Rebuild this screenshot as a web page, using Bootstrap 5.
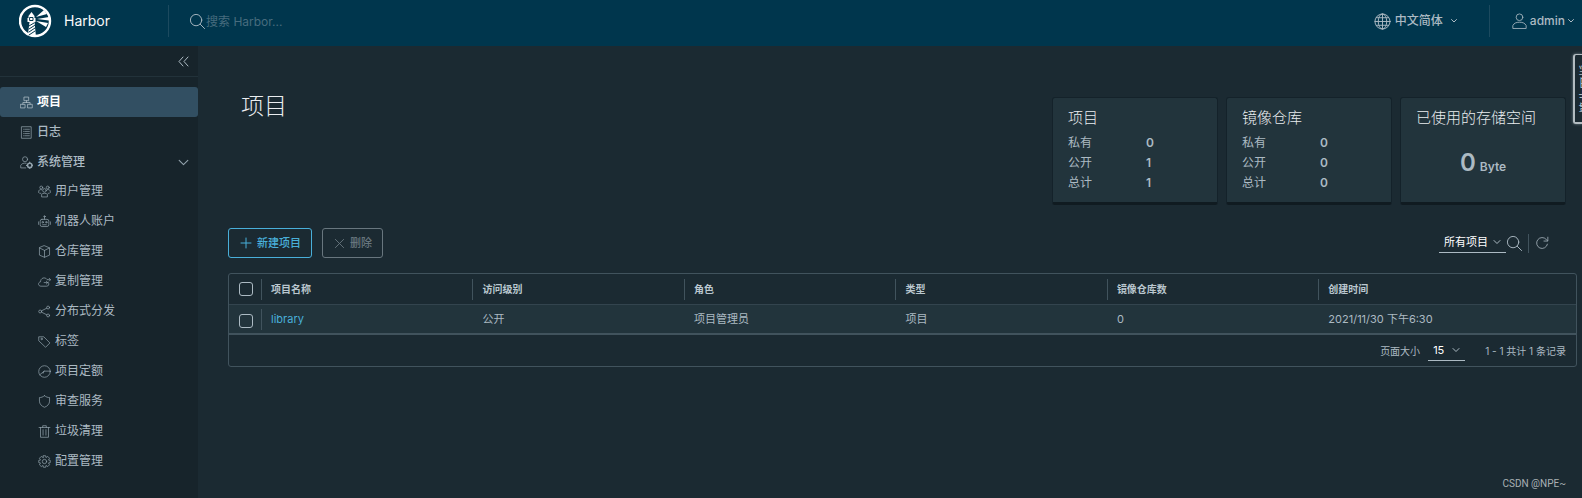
<!DOCTYPE html>
<html lang="zh-CN" data-bs-theme="dark">
<head>
<meta charset="utf-8">
<meta name="viewport" content="width=device-width, initial-scale=1">
<title>Harbor</title>
<link rel="stylesheet" href="https://cdn.jsdelivr.net/npm/bootstrap@5.3.0/dist/css/bootstrap.min.css">
<style>
body{font-family:Inter,"Noto Sans CJK SC",sans-serif;font-size:12px;line-height:20px;background:#1b2a32;color:#acbac3;overflow-x:hidden}
svg{fill:none;stroke:currentColor;stroke-width:2;stroke-linecap:round;stroke-linejoin:round;flex:none}
button{color:inherit}
.topbar{background:#00364d;height:46px}
.brand-link{padding-left:19px;gap:11px}
.brand-name{font-size:14px;color:#fafafa;width:104px}
.rule{width:1px;height:32px;background:#1c4a5f}
.search-box{background:none;border:0;outline:0;padding:2px 0 0;color:#fff;width:240px;height:20px}
.search-box::placeholder{color:#476c7e;opacity:1}
.plain{background:none;border:0;padding:0}
.user-menu{gap:3px;margin:0 8px 0 22px}
.side{width:198px;background:#17242b;flex:none}
.fold{height:31px;border-bottom:1px solid #22323a;margin-bottom:10px;padding-right:9px}
.side-link{height:30px;padding-left:20px;gap:4px;color:#acbac3;text-decoration:none;border-radius:3px;width:100%}
.side-link.top{font-weight:500}
.side-link.sub{padding-left:38px;padding-bottom:2px}
.side-link.current{background:#324f62;color:#fff;font-weight:700}
.side-link svg{width:13px;height:13px;color:#93a3ad}
.side-link.current svg{color:#b5c3cc}
.page{padding:51px 5px 0 30px;min-width:0}
.page h1{font-size:23px;line-height:28px;font-weight:300;color:#eaedf0;margin:-5px 0 0 13px}
.stats{gap:8px;margin-right:11px}
.stat{width:166px;height:108px;background:#22343c;border:1px solid #14222a;border-bottom:3px solid #101b21;border-radius:3px;padding:10px 15px}
.stat h2{font-size:15px;line-height:20px;font-weight:300;color:#eaedf0;margin:0 0 5px;white-space:nowrap}
.stat dl{display:grid;grid-template-columns:78px 1fr;margin:0}
.stat dt{font-weight:400}
.stat dd{margin:0;font-weight:600}
.big-num{font-size:24px;line-height:28px}
.tools{margin-top:23px;height:30px;padding-right:28px}
.act{height:30px;font-size:11px;line-height:20px;padding:0 10px 0 11px;gap:5px;border:1px solid #49afd9;border-radius:3px;background:none;color:#49afd9;font-weight:500}
.act:disabled{border-color:#68767e;color:#68767e;margin-left:10px}
.pick{position:relative;border-bottom:1px solid #acbac3;height:20px}
.pick select{appearance:none;background:none;border:0;outline:0;color:#fff;font-size:11px;line-height:18px;padding:0 5px;width:100%;height:18px;display:block}
.pick svg{position:absolute;right:5px;top:5px;pointer-events:none}
.tool-rule{width:1px;height:19px;background:#41535d;margin:0 6px 0 5px}
.grid-box{border:1px solid #41535d;border-radius:3px;margin-top:15px}
.grid-tab{width:100%;table-layout:fixed;border-collapse:collapse;font-size:11px}
.grid-tab th,.grid-tab td{height:30px;padding:0 0 0 10px;white-space:nowrap}
.grid-tab th{font-size:10px;font-weight:600;color:#bac7cf;background:linear-gradient(#41535d,#41535d) 0 5px/1px 21px no-repeat}
.grid-tab tbody td{background-color:#22343c}
.grid-tab thead tr{border-bottom:1px solid #33444e}
.grid-tab tbody tr{border-bottom:2px solid #41535d}
.grid-tab .tick{width:32px;background-image:none}
.grid-tab td.tick{padding-top:4px}
.grid-tab td.name-cell{background:linear-gradient(#41535d,#41535d) 0 4px/1px 21px no-repeat #22343c}
.grid-tab .eq{width:15.7%}
.grid-tab input{appearance:none;width:14px;height:14px;border:1px solid #acbac3;border-radius:3px;display:block;margin:0}
.grid-tab a{color:#49afd9;text-decoration:none}
.grid-foot{height:31px;padding-right:10px;font-size:10px}
.log-tab{position:absolute;right:0;top:54px;width:9px;height:70px;overflow:hidden;background:#1b2a32;border:2px solid #b3bcc1;border-width:1px 0 2px 2px;border-radius:3px 0 0 3px;box-shadow:0 0 3px #788890;padding:0}
.log-tab span{display:block;writing-mode:vertical-rl;transform:rotate(180deg);width:16px;margin:0 0 0 3px;font-size:12px;line-height:16px;white-space:nowrap}
.mark-note{position:absolute;right:16px;bottom:4px;font:10px/20px Roboto,sans-serif;color:#a9b0b4}
</style>
</head>
<body class="d-flex flex-column min-vh-100 position-relative">
<header class="topbar d-flex align-items-center pb-1">
  <a href="#" class="brand-link d-flex align-items-center text-decoration-none" aria-label="Harbor">
    <svg width="34" height="34" viewBox="0 0 34 34" style="color:#fff"><circle cx="16" cy="17" r="15" stroke-width="2.4"/><g fill="#fff" stroke="none"><path d="M9.500 12l3-4 3 4v2h1v4h-1l1.500 15-8-3 1.500-12h-2v-4h1z"/><path d="M17 13l8-7 3 4zM18 15l12-2v3.500zM17 17l12 2-2 4z"/></g><path d="M10 22l5-3M10 25l5.500-3.500M10 28l6-4M10 31l6-4" stroke="#00364d" stroke-width="1"/><path d="M11 13.500h3v3h-3z" stroke="#00364d" stroke-width="1"/></svg>
    <span class="brand-name">Harbor</span>
  </a>
  <span class="rule"></span>
  <label class="d-flex align-items-center ms-3 ps-1">
    <svg width="17" height="17" viewBox="0 0 36 36"><circle cx="15" cy="15" r="12"/><path d="M24 24l9 9"/></svg>
    <input class="search-box" type="search" placeholder="搜索 Harbor..." aria-label="搜索">
  </label>
  <button class="plain d-flex align-items-center ms-auto me-4">
    <svg width="17" height="17" viewBox="0 0 36 36"><circle cx="18" cy="18" r="16"/><path d="M18 2v32M2 18h32M5 10h26M5 26h26"/><ellipse cx="18" cy="18" rx="9" ry="16"/></svg>
    <span class="ms-1 me-2 fw-medium">中文简体</span>
    <svg width="6" height="6" viewBox="0 0 12 12"><path d="M1 3l5 5 5-5"/></svg>
  </button>
  <span class="rule ms-2"></span>
  <button class="plain user-menu d-flex align-items-center">
    <svg width="15" height="18" viewBox="0 0 36 40"><circle cx="18" cy="11" r="8"/><path d="M2 37v-6c3-6 8-8 16-8s13 2 16 8v6z"/></svg>
    <span class="fw-medium">admin</span>
    <svg width="6" height="6" viewBox="0 0 12 12"><path d="M1 3l5 5 5-5"/></svg>
  </button>
</header>

<div class="d-flex flex-grow-1">
  <nav class="side">
    <div class="fold d-flex align-items-center justify-content-end">
      <button class="plain d-flex" aria-label="收起"><svg width="11" height="11" viewBox="0 0 22 22"><path d="M10 2l-8 9 8 9M20 2l-8 9 8 9"/></svg></button>
    </div>
    <a href="#" class="side-link top current d-flex align-items-center"><svg viewBox="0 0 36 36"><path d="M12 3h12v10H12zM2 23h12v10H2zM22 23h12v10H22zM18 13v5M8 23v-5h20v5"/></svg>项目</a>
    <a href="#" class="side-link top d-flex align-items-center"><svg viewBox="0 0 36 36"><path d="M5 2h26v32H5zM10 9h2M15 9h11M10 15h2M15 15h11M10 21h2M15 21h11M10 27h2M15 27h11"/></svg>日志</a>
    <button class="side-link top plain d-flex align-items-center"><svg viewBox="0 0 36 36"><circle cx="14" cy="9" r="7"/><path d="M16 33H2v-7c3-5 7-7 15-6"/><circle cx="27" cy="26" r="6" stroke-width="4"/><path d="M27 17v3M27 32v3M18 26h3M33 26h3" stroke-width="3"/></svg>系统管理<svg class="ms-auto me-2" viewBox="0 0 24 24"><path d="M4 8l8 8 8-8"/></svg></button>
    <a href="#" class="side-link sub d-flex align-items-center"><svg viewBox="0 0 36 36"><circle cx="18" cy="15" r="5"/><circle cx="9" cy="7" r="4"/><circle cx="27" cy="7" r="4"/><path d="M10 32v-6c2-4 14-4 16 0v6zM2 21v-5c2-3 5-4 8-3M34 21v-5c-2-3-5-4-8-3M5 23h3M28 23h3"/></svg>用户管理</a>
    <a href="#" class="side-link sub d-flex align-items-center"><svg viewBox="0 0 36 36"><rect x="6" y="12" width="24" height="20" rx="5"/><path d="M18 12V5M1 19v7M35 19v7M13 27h10"/><circle cx="18" cy="4" r="2"/><circle cx="13" cy="20" r="2"/><circle cx="23" cy="20" r="2"/></svg>机器人账户</a>
    <a href="#" class="side-link sub d-flex align-items-center"><svg viewBox="0 0 36 36"><path d="M18 2l14 6v20l-14 6-14-6V8zM4 8l14 7 14-7M18 15v19"/></svg>仓库管理</a>
    <a href="#" class="side-link sub d-flex align-items-center"><svg viewBox="0 0 36 36"><path d="M29 21c3 5 0 10-5 10H8C0 31-1 20 7 19 7 8 19 4 25 12M17 21h10M23 17l4 4-4 4M26 13h8M31 9l4 4-4 4"/></svg>复制管理</a>
    <a href="#" class="side-link sub d-flex align-items-center"><svg viewBox="0 0 36 36"><circle cx="6" cy="18" r="4"/><circle cx="28" cy="7" r="4"/><circle cx="28" cy="29" r="4"/><path d="M10 16l14-7M10 20l14 7"/></svg>分布式分发</a>
    <a href="#" class="side-link sub d-flex align-items-center"><svg viewBox="0 0 36 36"><path d="M3 5h13l17 17-12 12L3 17z"/><circle cx="10" cy="11" r="2"/></svg>标签</a>
    <a href="#" class="side-link sub d-flex align-items-center"><svg viewBox="0 0 36 36"><circle cx="18" cy="18" r="16"/><path d="M5 27l12-10h17M17 17l-3 6"/></svg>项目定额</a>
    <a href="#" class="side-link sub d-flex align-items-center"><svg viewBox="0 0 36 36"><path d="M18 2c5 4 9 5 14 5v10c0 8-6 14-14 17C10 31 4 25 4 17V7c5 0 9-1 14-5z"/></svg>审查服务</a>
    <a href="#" class="side-link sub d-flex align-items-center"><svg viewBox="0 0 36 36"><path d="M3 7h30M7 7v27h22V7M13 7V2h10v5M14 13v15M22 13v15"/></svg>垃圾清理</a>
    <a href="#" class="side-link sub d-flex align-items-center"><svg viewBox="0 0 36 36"><circle cx="18" cy="18" r="6"/><path d="M15 2h6l1 5 5-3 5 5-3 5 5 1v6l-5 1 3 5-5 5-5-3-1 5h-6l-1-5-5 3-5-5 3-5-5-1v-6l5-1-3-5 5-5 5 3z"/></svg>配置管理</a>
  </nav>

  <main class="page flex-grow-1">
    <div class="d-flex justify-content-between align-items-start">
      <h1>项目</h1>
      <div class="stats d-flex">
        <section class="stat"><h2>项目</h2><dl><dt>私有</dt><dd>0</dd><dt>公开</dt><dd>1</dd><dt>总计</dt><dd>1</dd></dl></section>
        <section class="stat"><h2>镜像仓库</h2><dl><dt>私有</dt><dd>0</dd><dt>公开</dt><dd>0</dd><dt>总计</dt><dd>0</dd></dl></section>
        <section class="stat"><h2>已使用的存储空间</h2><div class="d-flex justify-content-center align-items-baseline gap-1 pt-3 mt-1 fw-semibold"><span class="big-num">0</span>Byte</div></section>
      </div>
    </div>

    <div class="tools d-flex align-items-center">
      <button class="act d-flex align-items-center"><svg width="12" height="12" viewBox="0 0 24 24"><path d="M12 2v20M2 12h20"/></svg>新建项目</button>
      <button class="act d-flex align-items-center" disabled><svg width="11" height="11" viewBox="0 0 24 24"><path d="M3 3l18 18M3 21L21 3"/></svg>删除</button>
      <div class="pick ms-auto" style="width:67px"><select aria-label="项目范围"><option>所有项目</option></select><svg width="8" height="8" viewBox="0 0 16 16"><path d="M2 5l6 6 6-6"/></svg></div>
      <button class="plain d-flex" aria-label="搜索"><svg width="17" height="17" viewBox="0 0 36 36"><circle cx="15" cy="15" r="12"/><path d="M24 24l9 9"/></svg></button>
      <span class="tool-rule"></span>
      <button class="plain d-flex" aria-label="刷新"><svg width="14" height="14" viewBox="0 0 36 36"><path d="M32 21A14 14 0 1 1 29 9l3 3M33 3v10H23"/></svg></button>
    </div>

    <div class="grid-box">
      <table class="grid-tab">
        <thead><tr><th class="tick"><input type="checkbox" aria-label="全选"></th><th class="eq">项目名称</th><th class="eq">访问级别</th><th class="eq">角色</th><th class="eq">类型</th><th class="eq">镜像仓库数</th><th>创建时间</th></tr></thead>
        <tbody><tr><td class="tick"><input type="checkbox" aria-label="选择 library"></td><td class="name-cell"><a href="#">library</a></td><td>公开</td><td>项目管理员</td><td>项目</td><td>0</td><td>2021/11/30 下午6:30</td></tr></tbody>
      </table>
      <div class="grid-foot d-flex align-items-center justify-content-end">
        <label for="size">页面大小</label>
        <div class="pick ms-2" style="width:37px"><select id="size"><option>15</option></select><svg width="8" height="8" viewBox="0 0 16 16"><path d="M2 5l6 6 6-6"/></svg></div>
        <span class="ms-3 ps-1">1 - 1 共计 1 条记录</span>
      </div>
    </div>
  </main>
</div>
<button class="log-tab" aria-label="事件日志"><span>事件日志</span></button>
<div class="mark-note">CSDN @NPE~</div>
<script src="https://cdn.jsdelivr.net/npm/bootstrap@5.3.0/dist/js/bootstrap.bundle.min.js"></script>
</body>
</html>
